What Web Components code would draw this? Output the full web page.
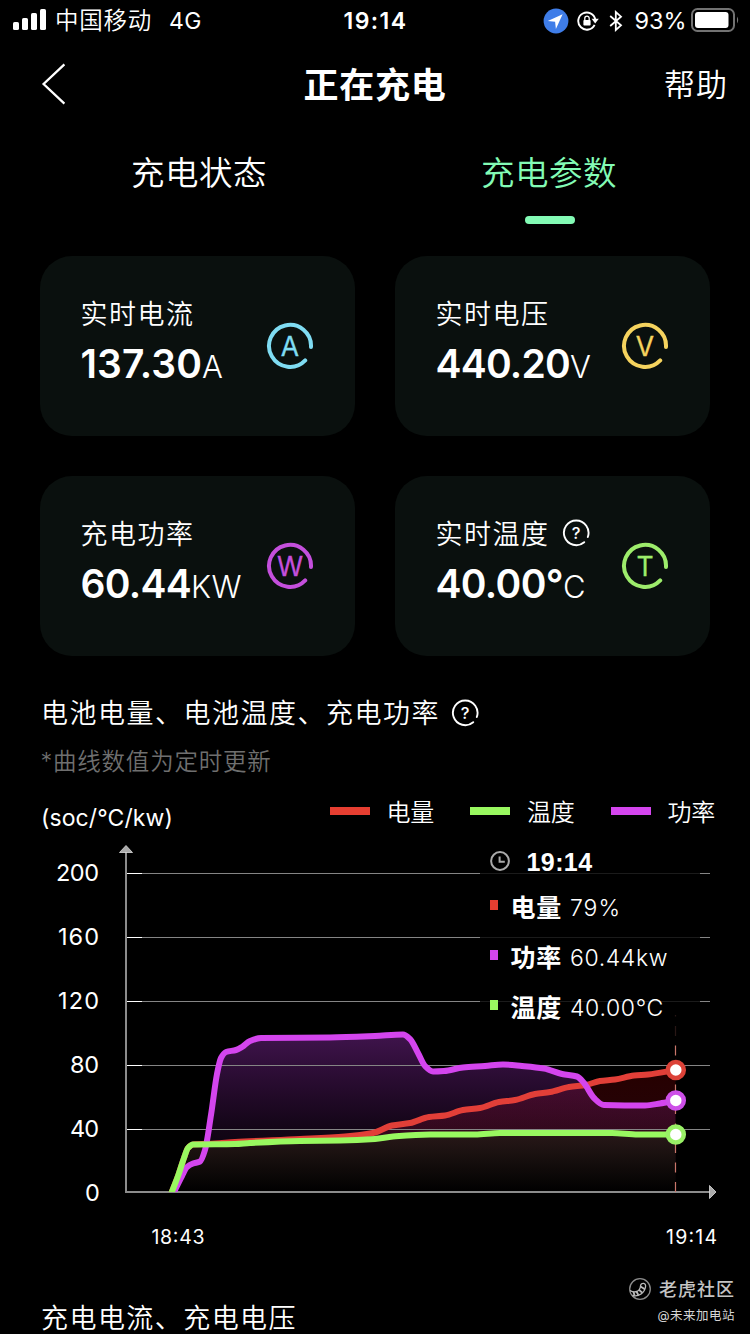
<!DOCTYPE html>
<html lang="zh-CN">
<head>
<meta charset="utf-8">
<title>正在充电</title>
<style>
html,body{margin:0;background:#000}
body{width:750px;height:1334px;overflow:hidden;color:#fff;font-family:Inter,"Noto Sans CJK SC",sans-serif}
</style>
</head>
<body>
<charging-page></charging-page>
<script>
const define=(name,html,setup)=>customElements.define(name,class extends HTMLElement{
  connectedCallback(){
    if(this.shadowRoot)return;
    const t=document.createElement('template');
    t.innerHTML=html;
    this.attachShadow({mode:'open'}).appendChild(t.content.cloneNode(true));
    if(setup)setup.call(this,this.shadowRoot);
  }
});

/* Tracks its text out (or in) so that it fills the advance width given in "w". */
define('fit-text',`<style>:host{display:inline-block;white-space:nowrap}</style><span><slot></slot></span>`,function(root){
  const want=+this.getAttribute('w');
  if(!want)return;
  const n=[...this.textContent].length;
  const have=root.querySelector('span').getBoundingClientRect().width;
  this.style.letterSpacing=((want-have)/n).toFixed(3)+'px';
});

define('status-bar',`<style>
:host{display:flex;height:40px;align-items:center;box-sizing:border-box;padding:1px 10px 0 13px;font-size:23.500px;line-height:40px}
.l,.r{flex:1;display:flex;align-items:center}
.r{justify-content:flex-end}
.t{font-weight:600;margin-left:-2px;font-size:23px}
svg{display:block;flex:none}
</style>
<div class="l">
<svg width="34" height="22" viewBox="0 0 34 22" fill="#fff" style="margin-top:-2px"><rect y="13" width="6" height="8" rx="1.6"/><rect x="9" y="9" width="6" height="12" rx="1.6"/><rect x="18" y="4" width="6" height="17" rx="1.6"/><rect x="27" y="0" width="6" height="21" rx="1.6"/></svg>
<fit-text w="97" style="margin-left:8px;font-weight:350">中国移动</fit-text><fit-text w="33" style="margin-left:17px;font-size:23px">4G</fit-text></div>
<div class="t"><fit-text w="64">19:14</fit-text></div>
<div class="r">
<svg width="26" height="26" viewBox="0 0 26 26"><circle cx="13" cy="13" r="12.4" fill="#3f7de8"/><path d="M19.6 6.2 4.8 12.9l7.3.8.8 7.3z" fill="#fff"/></svg>
<svg width="22" height="22" viewBox="0 0 22 22" style="margin-left:8px" fill="none" stroke="#fff" stroke-width="1.900"><path d="M17.600 14.800A8.600 8.600 0 1 1 18.300 9.500"/><path d="M14.600 8.800h7.200L18.200 13.600z" fill="#fff" stroke="none"/><rect x="6.400" y="9.900" width="7.200" height="5.600" rx=".8" fill="#fff" stroke="none"/><path d="M7.800 10V8.300a2.200 2.200 0 0 1 4.400 0V10" stroke-width="1.300"/></svg>
<svg width="14" height="22" viewBox="0 0 14 22" style="margin-left:10px" fill="none" stroke="#fff" stroke-width="1.8"><path d="M1.200 6 12 15.300 6.800 20V2L12 6.700 1.200 16"/></svg>
<fit-text w="52" style="margin-left:12px">93%</fit-text>
<svg width="49" height="24" viewBox="0 0 49 24" style="margin-left:4.500px;margin-top:-2px"><rect x="1" y="1" width="42" height="22" rx="5.5" fill="none" stroke="#727272" stroke-width="2"/><rect x="4" y="4" width="33.5" height="16" rx="3" fill="#fff"/><path d="M46 8.5q2.4 3.5 0 7z" fill="#777"/></svg>
</div>`);

define('nav-bar',`<style>
:host{display:grid;grid-template-columns:1fr auto 1fr;align-items:center;height:88px;padding:0 22px 0 41px;line-height:50px}
h1{margin:2px 0 0 -19px;font-size:35px;font-weight:600}
.h{justify-self:end;font-size:31px;font-weight:350;margin:2px 0 0}
</style>
<svg width="26" height="42" viewBox="0 0 26 42" fill="none" stroke="#fff" stroke-width="2.3"><path d="M23.4 1.3 2.6 21 23.4 40.6"/></svg>
<h1><fit-text w="143">正在充电</fit-text></h1><div class="h"><fit-text w="64">帮助</fit-text></div>`);

define('tab-item',`<style>
:host{display:flex;flex-direction:column;align-items:center;font-size:33.500px;font-weight:350;line-height:50px;color:#fff}
i{width:50px;height:8px;border-radius:4px;margin-top:18px}
fit-text{letter-spacing:.5px;margin-left:-2px}
:host([active]){color:#83fbb5}
:host([active]) i{background:#83fbb5}
</style><fit-text><slot></slot></fit-text><i></i>`);

define('tab-strip',`<style>:host{display:grid;grid-template-columns:350px 350px;height:128px;padding:20px 0 0 25px;box-sizing:border-box}</style><slot></slot>`);

define('help-icon',`<style>:host{display:inline-block;width:28px;height:28px}svg{display:block}text{font:500 16.500px Inter,sans-serif}</style>
<svg width="28" height="28" viewBox="0 0 28 28"><path d="M25.800 18A12.300 12.300 0 1 0 22.200 23.200" fill="none" stroke="#fff" stroke-width="1.900" stroke-linecap="round"/><text x="14" y="20" text-anchor="middle" fill="#fff">?</text></svg>`);

define('ring-icon',`<style>:host{display:block;width:48px;height:48px}svg{display:block}text{font:400 26.500px Inter,sans-serif}</style>
<svg width="48" height="48" viewBox="0 0 48 48"><path d="M45 25A21 21 0 1 0 39.2 38.4" fill="none" stroke="currentColor" stroke-width="4" stroke-linecap="round"/><text x="24" y="33.8" text-anchor="middle" fill="currentColor" stroke="currentColor" stroke-width=".3"></text></svg>`,function(root){
  root.querySelector('text').textContent=this.getAttribute('letter');
});

define('metric-card',`<style>
:host{display:flex;justify-content:space-between;box-sizing:border-box;width:315px;height:180px;border-radius:32px;background:#0a100e;padding:39px 41px 0 40.500px}
.label{display:flex;align-items:center;height:40px;font-size:27px;font-weight:350;line-height:40px;white-space:nowrap}
.v{display:flex;align-items:baseline;line-height:60px;white-space:nowrap;margin-top:-1px}
b{font-size:39px;font-weight:600}
.u{font-size:31px;font-weight:350}
ring-icon{margin:27px 0 0 0;flex:none}
.c{width:184px;flex:none}
help-icon{margin:-4px 0 0 12.500px}
</style>
<div class="c"><div class="label"><fit-text></fit-text></div><div class="v"><b><fit-text></fit-text></b><span class="u"><fit-text></fit-text></span></div></div><ring-icon></ring-icon>`,function(root){
  const a=n=>this.getAttribute(n);
  const fill=(sel,text,w)=>{
    const old=root.querySelector(sel),el=document.createElement('fit-text');
    el.textContent=text;el.setAttribute('w',w);old.replaceWith(el);
  };
  fill('.label fit-text',a('label'),114);
  fill('b fit-text',a('value'),a('vw'));
  fill('.u fit-text',a('unit'),a('uw'));
  if(this.hasAttribute('help'))root.querySelector('.label').append(document.createElement('help-icon'));
  const ring=document.createElement('ring-icon');
  ring.setAttribute('letter',a('letter'));ring.style.color=a('color');
  root.querySelector('ring-icon').replaceWith(ring);
});

define('chart-legend',`<style>
:host{display:flex;justify-content:space-between;align-items:center;height:40px;padding:0 35px 0 41px;font-size:24px;line-height:40px}
.k{display:flex;gap:36px;margin-top:1px}
.k div{display:flex;align-items:center;gap:17px;font-weight:350}
i{width:40px;height:8px;margin-top:-3px}
</style>
<fit-text w="132" style="margin-top:11px;font-size:23px">(soc/°C/kw)</fit-text>
<div class="k"><div><i style="background:#e63e31"></i><fit-text w="47.5">电量</fit-text></div><div><i style="background:#99f860"></i><fit-text w="47.5">温度</fit-text></div><div><i style="background:#d445ee"></i><fit-text w="47.5">功率</fit-text></div></div>`);

define('chart-tooltip',`<style>
:host{display:grid;grid-template-rows:43px 50px 50px 50px;box-sizing:border-box;width:220px;height:196px;padding-left:10px;background:rgba(0,0,0,.8);font-size:23px;line-height:50px}
.row{display:flex;align-items:center;white-space:nowrap}
i{width:8px;height:10px;margin:-6px 12.500px 0 0}
b{font-size:25px;font-weight:600;margin-right:8px}
.time{line-height:44px}
.time b{font:700 25px "Liberation Sans",sans-serif;line-height:44px;margin-left:16.500px}
.time svg{margin-top:-2px}
.row span{font-weight:350}
</style>
<div class="row time"><svg width="20" height="20" viewBox="0 0 20 20" fill="none" stroke="#aaa" stroke-width="2"><circle cx="10" cy="10" r="8.9"/><path d="M9.6 5.5v5.2h5.2"/></svg><b><fit-text w="66">19:14</fit-text></b></div>
<div class="row"><i style="background:#e63e31"></i><b><fit-text w="51.5">电量</fit-text></b><span><fit-text w="51">79%</fit-text></span></div>
<div class="row"><i style="background:#d445ee"></i><b><fit-text w="51.5">功率</fit-text></b><span><fit-text w="98">60.44kw</fit-text></span></div>
<div class="row"><i style="background:#99f860"></i><b><fit-text w="51.5">温度</fit-text></b><span><fit-text w="94">40.00°C</fit-text></span></div>`);

define('line-chart',`<style>
:host{display:block;position:relative;width:750px;height:428px}
svg{display:block}
text{fill:#fff;font-family:Inter,sans-serif}
.y{font-size:23.500px}.x{font-size:19.500px}
chart-tooltip{position:absolute;left:480px;top:4px}
</style>
<svg width="750" height="428" viewBox="0 836 750 428">
<defs>
<linearGradient id="gp" gradientUnits="userSpaceOnUse" x1="0" y1="1034" x2="0" y2="1192"><stop offset="0" stop-color="#c83ef0" stop-opacity=".32"/><stop offset=".6" stop-color="#b030d0" stop-opacity=".11"/><stop offset="1" stop-color="#d445ee" stop-opacity="0"/></linearGradient>
<linearGradient id="gr" gradientUnits="userSpaceOnUse" x1="0" y1="1070" x2="0" y2="1192"><stop offset="0" stop-color="#c00000" stop-opacity=".2"/><stop offset=".5" stop-color="#e01830" stop-opacity=".16"/><stop offset="1" stop-color="#e63e31" stop-opacity="0"/></linearGradient>
<linearGradient id="gg" gradientUnits="userSpaceOnUse" x1="0" y1="1133" x2="0" y2="1192"><stop offset="0" stop-color="#271c18" stop-opacity=".8"/><stop offset="1" stop-color="#000"/></linearGradient>
<clipPath id="plot"><rect x="126" y="840" width="600" height="352"/></clipPath>
</defs>
<g class="areas"></g>
<g class="grid"></g>
<path d="M126 850V1192.5M125 1192H711" stroke="#8c8c8c" stroke-width="2" fill="none"/>
<path d="M119.5 852.5 126 845.5l6.500 7z" fill="#aaa" stroke="#ddd" stroke-width=".8"/>
<path d="M709.500 1185.500V1198.500L716 1192z" fill="#aaa" stroke="#ddd" stroke-width=".8"/>
<path d="M675.500 1192V1015" stroke="#c9766a" stroke-width="1.200" stroke-dasharray="10 9.500"/>
<g class="lines" clip-path="url(#plot)" fill="none" stroke-width="6" stroke-linejoin="round"></g>
<g class="dots" fill="#fff" stroke-width="4.500"></g>
<text class="x" x="151.500" y="1244" textLength="53">18:43</text><text class="x" x="666" y="1244" textLength="51">19:14</text>
</svg><chart-tooltip></chart-tooltip>`,function(root){
  const $=s=>root.querySelector(s);
  /* Monotone cubic through the points, so that plateaus stay level. */
  const curve=p=>{
    const n=p.length,d=[],m=[];
    for(let i=0;i<n-1;i++)d[i]=(p[i+1][1]-p[i][1])/(p[i+1][0]-p[i][0]);
    m[0]=d[0];m[n-1]=d[n-2];
    for(let i=1;i<n-1;i++)m[i]=d[i-1]*d[i]<=0?0:2*d[i-1]*d[i]/(d[i-1]+d[i]);
    let s='M'+p[0];
    for(let i=0;i<n-1;i++){
      const h=(p[i+1][0]-p[i][0])/3;
      s+=`C${p[i][0]+h} ${p[i][1]+h*m[i]} ${p[i+1][0]-h} ${p[i+1][1]-h*m[i+1]} ${p[i+1][0]} ${p[i+1][1]}`;
    }
    return s;
  };
  const start=[[171,1194],[178,1176],[184,1158],[188,1148],[193,1144.500]];
  const red=[...start,[215,1143.500],[235,1142],[300,1139],[345,1136.500],[373,1133],[392,1125.500],[410,1123],[429,1117],[445,1115.500],[463,1110],[480,1108],[499,1102],[515,1100],[535,1094],[550,1092],[569,1087],[586,1085],[600,1081],[615,1079.500],[634,1075.500],[648,1074.500],[675.500,1070]];
  const green=[...start,[235,1144],[250,1143],[300,1141],[340,1140.500],[375,1139],[393,1136.500],[430,1134.500],[475,1134.500],[500,1133],[612,1133],[638,1134.500],[675.500,1134.500]];
  const purple=[[173,1194],[182,1176],[187,1167],[193,1163.500],[200,1161.500],[205,1150],[211,1115],[217,1074],[221,1058],[226,1052],[236,1050],[242,1047],[250,1041],[261,1038],[330,1037.500],[375,1036],[403,1034.500],[410,1039],[418,1053],[425,1066],[433,1071.500],[444,1071],[463,1067.500],[485,1066],[503,1064.500],[522,1066],[544,1068.500],[562,1074],[577,1076.500],[584,1083],[594,1098],[604,1105],[645,1105.500],[660,1103.500],[675.500,1100.500]];
  const area=(p,id)=>`<path d="${curve(p)}V1192H171Z" fill="url(#${id})"/>`;
  $('.areas').innerHTML=area(red,'gr')+area(purple,'gp')+area(green,'gg');
  let g='';
  [200,160,120,80,40,0].forEach((v,i)=>{
    const y=873+64*i;
    if(v)g+=`<path d="M127 ${y+.5}H710" stroke="#858585"/><path d="M127 ${y+.5}H142" stroke="#fff"/>`;
    const w=v>=100?(v===200?43:41):v?29:14;
    g+=`<text class="y" x="${99-w}" y="${y+8}" textLength="${w}">${v}</text>`;
  });
  $('.grid').innerHTML=g;
  $('.lines').innerHTML=[[red,'#e23f38'],[purple,'#d445ee'],[green,'#99f860']].map(([p,c])=>`<path d="${curve(p)}" stroke="${c}"/>`).join('');
  $('.dots').innerHTML=[[1070,'#dc4238'],[1100.500,'#cd4fe8'],[1134.500,'#99f066']].map(([y,c])=>`<circle cx="675.800" cy="${y}" r="8" stroke="${c}"/>`).join('');
});

define('section-title',`<style>:host{display:flex;align-items:center;font-size:27px;font-weight:350;height:44px;line-height:44px;padding-left:41px;white-space:nowrap}</style><slot></slot>`);

define('site-watermark',`<style>
:host{display:flex;flex-direction:column;align-items:flex-end;color:#c4c4c4}
div{display:flex;align-items:center;height:28px;line-height:28px;font-size:18px;font-weight:500;gap:7px}
svg{margin-top:-2px}
p{margin:1px 0 0;font-size:12.500px;line-height:22px;color:#d5d5d5}
</style><div><svg width="24" height="24" viewBox="0 0 24 24" fill="none" stroke="#8c8c8c" stroke-width="1.300"><circle cx="12" cy="12" r="10.300"/><path d="M2 13.500c5 3 10 1 10.500-4.500.5-4 6-3.500 5 1C16.500 16 11 20 4.500 18.500" stroke="#bbb"/><path d="M5.500 14.800l1 3.700M8.500 14.500l1.800 3.500M11 12.800l3 2.700M12.500 9.500l4 2.500" stroke="#bbb" stroke-width="1.800"/></svg><fit-text w="76">老虎社区</fit-text></div><p><fit-text w="77.500">@未来加电站</fit-text></p>`);

define('charging-page',`<style>
:host{display:block;position:relative;width:750px;height:1334px;overflow:hidden;background:#000}
.cards{display:grid;grid-template-columns:315px 315px;gap:40px;padding:0 40px}
.note{display:block;height:40px;line-height:40px;margin:6px 0 0 40.500px;font-size:23.500px;font-weight:350;color:#6f6f6f}
chart-legend{margin-top:10px}
site-watermark{position:absolute;right:15px;bottom:7px}
</style>
<status-bar></status-bar>
<nav-bar></nav-bar>
<tab-strip><tab-item>充电状态</tab-item><tab-item active>充电参数</tab-item></tab-strip>
<div class="cards">
<metric-card label="实时电流" value="137.30" vw="121.500" unit="A" uw="22" letter="A" color="#7fdcf2"></metric-card>
<metric-card label="实时电压" value="440.20" vw="134.500" unit="V" uw="22" letter="V" color="#f5d35e"></metric-card>
<metric-card label="充电功率" value="60.44" vw="110.500" unit="KW" uw="51" letter="W" color="#c44fdc"></metric-card>
<metric-card label="实时温度" help value="40.00°" vw="127.500" unit="C" uw="23" letter="T" color="#9dec6b"></metric-card>
</div>
<section-title style="margin-top:36px"><fit-text w="399">电池电量、电池温度、充电功率</fit-text><help-icon style="margin:-2px 0 0 11px"></help-icon></section-title>
<div class="note"><fit-text w="231">*曲线数值为定时更新</fit-text></div>
<chart-legend></chart-legend>
<line-chart style="margin-top:4px"></line-chart>
<section-title style="margin-top:33px"><fit-text w="256">充电电流、充电电压</fit-text></section-title>
<site-watermark></site-watermark>`);
</script>
</body>
</html>
